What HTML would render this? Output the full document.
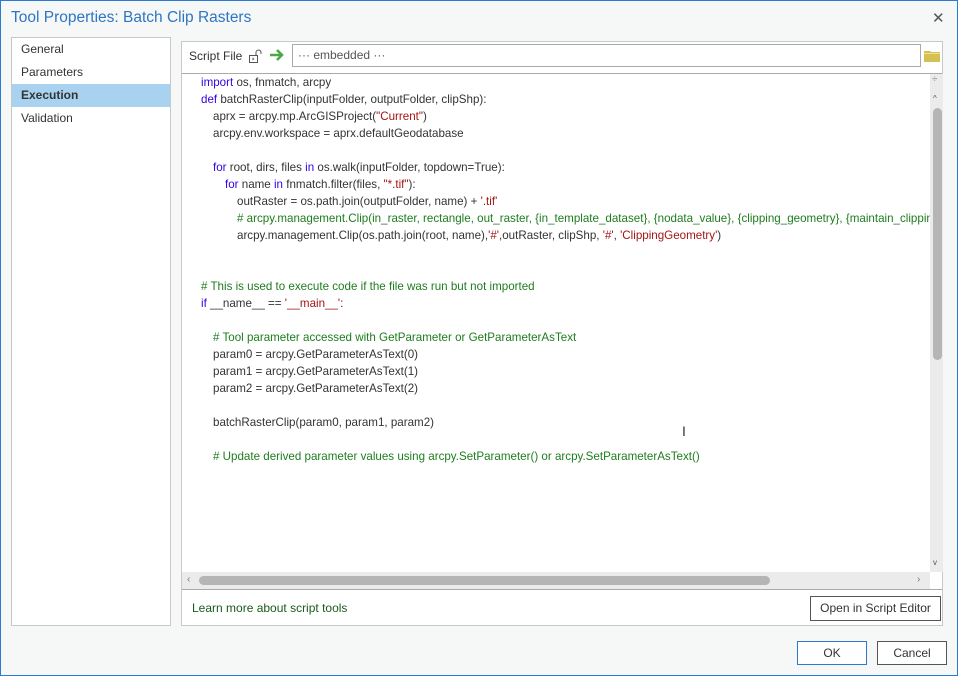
<!DOCTYPE html>
<html><head><style>
*{margin:0;padding:0;box-sizing:border-box}
body{width:958px;height:676px;overflow:hidden;background:#fff;font-family:"Liberation Sans",sans-serif;font-size:12px;color:#333;position:relative}
.win{position:absolute;left:0;top:0;width:958px;height:676px;box-shadow:inset 0 0 0 1px #2b79d0;background:#f6f7f7}
.abs{position:absolute}
.title{left:11px;top:9px;font-size:15.5px;color:#2e76c2}
.close{left:932px;top:9px;font-size:15px;color:#555}
.left{left:11px;top:37px;width:160px;height:589px;background:#fff;border:1px solid #c8c8c8}
.left div{height:23px;line-height:23px;padding-left:9px;font-size:12px;color:#333}
.left .sel{background:#a8d2f0;font-weight:bold}
.right{left:181px;top:41px;width:762px;height:585px;background:#fff;border:1px solid #c8c8c8}
.code{position:absolute;left:0;top:32px;width:748px;height:498px;overflow:hidden;font-size:11.6px;white-space:pre}
.code div{position:absolute;height:17px;line-height:17px}
.k{color:#3300e6}.s{color:#a31515}.c{color:#1e7d1e}
.btn{border:1px solid #555;background:#fff;text-align:center;font-size:12px;color:#333}
</style></head><body>
<div class="win">
<div class="abs title">Tool Properties: Batch Clip Rasters</div>
<div class="abs close">✕</div>
<div class="abs left">
<div>General</div><div>Parameters</div><div class="sel">Execution</div><div>Validation</div>
</div>
<div class="abs right">
 <div class="abs" style="left:7px;top:7px;font-size:12px">Script File</div>
 <svg class="abs" style="left:66px;top:6px" width="16" height="16" viewBox="0 0 16 16"><rect x="1.5" y="7.5" width="8" height="7" fill="none" stroke="#555"/><path d="M8 7.5V4.5a2.5 2.5 0 0 1 5 0V6" fill="none" stroke="#555"/><path d="M4.5 9.5l2 1.5-2 1.5z" fill="#555"/></svg>
 <svg class="abs" style="left:86px;top:5px" width="18" height="16" viewBox="0 0 18 16"><path d="M2 8h12M9 3l5 5-5 5" fill="none" stroke="#4aa84a" stroke-width="2.5"/></svg>
 <div class="abs" style="left:110px;top:2px;width:629px;height:23px;border:1px solid #aaa;padding-left:5px;line-height:21px;color:#555">··· embedded ···</div>
 <svg class="abs" style="left:742px;top:8px" width="16" height="12"><path d="M0 1h6l1 1h9v10H0z" fill="#d4c150"/><rect x="0" y="3" width="16" height="1" fill="#fff" opacity=".5"/></svg>
 <div class="abs" style="left:0;top:31px;width:760px;height:1px;background:#aaa"></div>
 <div class="code">
<div style="top:0;left:19px"><span class="k">import</span> os, fnmatch, arcpy</div>
<div style="top:17px;left:19px"><span class="k">def</span> batchRasterClip(inputFolder, outputFolder, clipShp):</div>
<div style="top:34px;left:31px">aprx = arcpy.mp.ArcGISProject(<span class="s">"Current"</span>)</div>
<div style="top:51px;left:31px">arcpy.env.workspace = aprx.defaultGeodatabase</div>
<div style="top:85px;left:31px"><span class="k">for</span> root, dirs, files <span class="k">in</span> os.walk(inputFolder, topdown=True):</div>
<div style="top:102px;left:43px"><span class="k">for</span> name <span class="k">in</span> fnmatch.filter(files, <span class="s">"*.tif"</span>):</div>
<div style="top:119px;left:55px">outRaster = os.path.join(outputFolder, name) + <span class="s">'.tif'</span></div>
<div style="top:136px;left:55px" class="c"># arcpy.management.Clip(in_raster, rectangle, out_raster, {in_template_dataset}, {nodata_value}, {clipping_geometry}, {maintain_clipping_extent})</div>
<div style="top:153px;left:55px">arcpy.management.Clip(os.path.join(root, name),<span class="s">'#'</span>,outRaster, clipShp, <span class="s">'#'</span>, <span class="s">'ClippingGeometry'</span>)</div>
<div style="top:204px;left:19px" class="c"># This is used to execute code if the file was run but not imported</div>
<div style="top:221px;left:19px"><span class="k">if</span> __name__ == <span class="s">'__main__'</span>:</div>
<div style="top:255px;left:31px" class="c"># Tool parameter accessed with GetParameter or GetParameterAsText</div>
<div style="top:272px;left:31px">param0 = arcpy.GetParameterAsText(0)</div>
<div style="top:289px;left:31px">param1 = arcpy.GetParameterAsText(1)</div>
<div style="top:306px;left:31px">param2 = arcpy.GetParameterAsText(2)</div>
<div style="top:340px;left:31px">batchRasterClip(param0, param1, param2)</div>
<div style="top:374px;left:31px" class="c"># Update derived parameter values using arcpy.SetParameter() or arcpy.SetParameterAsText()</div>
 </div>
 <div class="abs" style="left:500px;top:381px;font-size:14px;color:#333">I</div>
 <div class="abs" style="left:748px;top:32px;width:13px;height:498px;background:#ebebeb"></div>
 <div class="abs" style="left:750px;top:32px;font-size:10px;color:#888">÷</div>
 <div class="abs" style="left:751px;top:52px;font-size:8px;color:#555">^</div>
 <div class="abs" style="left:751px;top:66px;width:9px;height:252px;background:#b5b5b5;border-radius:5px"></div>
 <div class="abs" style="left:751px;top:516px;font-size:8px;color:#555">v</div>
 <div class="abs" style="left:0;top:530px;width:748px;height:17px;background:#ebebeb"></div>
 <div class="abs" style="left:5px;top:532px;font-size:10px;color:#777">‹</div>
 <div class="abs" style="left:17px;top:534px;width:571px;height:9px;background:#b5b5b5;border-radius:5px"></div>
 <div class="abs" style="left:735px;top:532px;font-size:10px;color:#777">›</div>
 <div class="abs" style="left:0;top:547px;width:760px;height:1px;background:#aaa"></div>
 <div class="abs" style="left:10px;top:559px;color:#1a5a1a">Learn more about script tools</div>
 <div class="abs btn" style="left:628px;top:554px;width:131px;height:25px;line-height:23px">Open in Script Editor</div>
</div>
<div class="abs btn" style="left:797px;top:641px;width:70px;height:24px;line-height:22px;border-color:#2b79d0">OK</div>
<div class="abs btn" style="left:877px;top:641px;width:70px;height:24px;line-height:22px">Cancel</div>
</div>
</body></html>
